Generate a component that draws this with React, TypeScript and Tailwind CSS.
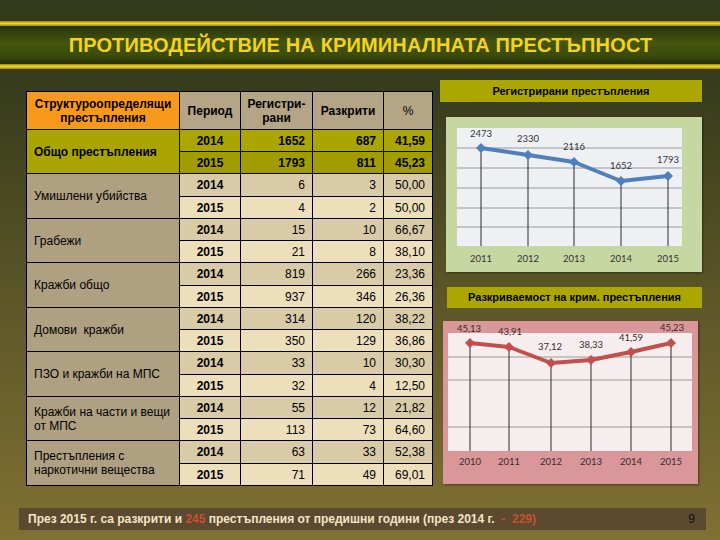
type Row = { name: string; total?: boolean; d: string[][] };

const rows: Row[] = [
  { name: "Общо престъпления", total: true, d: [["2014", "1652", "687", "41,59"], ["2015", "1793", "811", "45,23"]] },
  { name: "Умишлени убийства", d: [["2014", "6", "3", "50,00"], ["2015", "4", "2", "50,00"]] },
  { name: "Грабежи", d: [["2014", "15", "10", "66,67"], ["2015", "21", "8", "38,10"]] },
  { name: "Кражби общо", d: [["2014", "819", "266", "23,36"], ["2015", "937", "346", "26,36"]] },
  { name: "Домови  кражби", d: [["2014", "314", "120", "38,22"], ["2015", "350", "129", "36,86"]] },
  { name: "ПЗО и кражби на МПС", d: [["2014", "33", "10", "30,30"], ["2015", "32", "4", "12,50"]] },
  { name: "Кражби на части и вещи от МПС", d: [["2014", "55", "12", "21,82"], ["2015", "113", "73", "64,60"]] },
  { name: "Престъпления с наркотични вещества", d: [["2014", "63", "33", "52,38"], ["2015", "71", "49", "69,01"]] },
];

type Pt = { x: number; y: number; label: string; ly: number; lx?: number; year: string };

const regPts: Pt[] = [
  { x: 35, y: 31, label: "2473", ly: 18, year: "2011" },
  { x: 82, y: 38, label: "2330", ly: 23, year: "2012" },
  { x: 128, y: 45, label: "2116", ly: 31, year: "2013" },
  { x: 175, y: 64, label: "1652", ly: 50, year: "2014" },
  { x: 222, y: 59, label: "1793", ly: 44, year: "2015" },
];

const solvedPts: Pt[] = [
  { x: 27, y: 22, label: "45,13", ly: 9, lx: 26, year: "2010" },
  { x: 66, y: 26, label: "43,91", ly: 12, lx: 67, year: "2011" },
  { x: 108, y: 42, label: "37,12", ly: 27, lx: 107, year: "2012" },
  { x: 148, y: 39, label: "38,33", ly: 25, year: "2013" },
  { x: 188, y: 31, label: "41,59", ly: 18, year: "2014" },
  { x: 228, y: 22, label: "45,23", ly: 8, lx: 229, year: "2015" },
];

function LineChart({
  w, h, plot, grid, pts, color, plotFill, yearY, textColor,
}: {
  w: number; h: number; plot: [number, number, number, number]; grid: number[];
  pts: Pt[]; color: string; plotFill: string; yearY: number; textColor: string;
}) {
  const [px, py, pw, ph] = plot;
  const bottom = py + ph;
  return (
    <svg width={w} height={h} className="block">
      <rect x={px} y={py} width={pw} height={ph} fill={plotFill} />
      {grid.map((g) => (
        <line key={g} x1={px} x2={px + pw} y1={g} y2={g} stroke="#9a9a9a" strokeWidth={1} />
      ))}
      {pts.map((p) => (
        <line key={p.year} x1={p.x} x2={p.x} y1={p.y} y2={bottom} stroke="#2a2a2a" strokeWidth={1} />
      ))}
      <polyline
        points={pts.map((p) => `${p.x},${p.y}`).join(" ")}
        fill="none"
        stroke={color}
        strokeWidth={4}
        strokeLinejoin="round"
      />
      {pts.map((p) => (
        <polygon key={p.year} points={`${p.x},${p.y - 5} ${p.x + 5},${p.y} ${p.x},${p.y + 5} ${p.x - 5},${p.y}`} fill={color} />
      ))}
      <g fontFamily="Lato, 'Liberation Sans', sans-serif" fontSize={9.5} fill={textColor} textAnchor="middle" dominantBaseline="middle">
        {pts.map((p) => (
          <text key={p.year} x={p.lx ?? p.x} y={p.ly}>{p.label}</text>
        ))}
        {pts.map((p) => (
          <text key={p.year} x={p.x} y={yearY}>{p.year}</text>
        ))}
      </g>
    </svg>
  );
}

const rowHeights = "grid-rows-[37px_21px_21px_22px_21px_21px_21px_22px_21px_21px_21px_22px_21px_21px_21px_22px_21px]";

function CrimeTable() {
  return (
    <div className={`grid w-fit grid-cols-[152px_60px_71px_70px_48px] ${rowHeights} gap-px bg-black p-px text-[12px] text-black`}>
      <div className="flex items-center justify-center bg-[#f8991c] px-1 text-center font-bold leading-[14px]">
        Структуроопределящи престъпления
      </div>
      <div className="flex items-center justify-center bg-[#b4a587] font-bold">Период</div>
      <div className="flex items-center justify-center bg-[#b4a587] text-center font-bold leading-[14px]">
        Регистри-<br />рани
      </div>
      <div className="flex items-center justify-center bg-[#b4a587] font-bold">Разкрити</div>
      <div className="flex items-center justify-center bg-[#b4a587]">%</div>

      {rows.map((r) => (
        <>
          <div
            key={r.name}
            className={
              r.total
                ? "row-span-2 flex items-center bg-[#a9a400] pl-[7px] pr-2 font-bold leading-[14px]"
                : "row-span-2 flex items-center bg-[#b0a082] pl-[7px] pr-2 leading-[14px] whitespace-pre-wrap"
            }
          >
            {r.name}
          </div>
          {r.d.map((c, i) => {
            const bg = r.total ? (i === 0 ? "bg-[#aaa500]" : "bg-[#a19d00]") : i === 0 ? "bg-[#d9cba8]" : "bg-[#eddfbc]";
            return (
              <>
                <div key={r.name + i + "p"} className={`flex items-center justify-center font-bold ${bg}`}>{c[0]}</div>
                {c.slice(1).map((v, j) => (
                  <div key={r.name + i + j} className={`flex items-center justify-end pr-[7px] ${r.total ? "font-bold" : ""} ${bg}`}>
                    {v}
                  </div>
                ))}
              </>
            );
          })}
        </>
      ))}
    </div>
  );
}

export default function App() {
  return (
    <div
      className="flex h-[540px] w-[720px] flex-col overflow-hidden bg-[linear-gradient(180deg,#333a1b_0%,#363c1c_16%,#5c5627_55%,#817033_100%)]"
      style={{ fontFamily: "'Liberation Sans', Arial, sans-serif" }}
    >
      {/* title */}
      <div className="mt-[21px]">
        <div className="h-[5px] bg-[linear-gradient(180deg,#9c8410,#f6d624_50%,#9c8410)]" />
        <div className="flex h-[38px] items-center justify-center bg-[linear-gradient(180deg,#27320a,#45560f_45%,#3a4a0c_80%,#242e08)]">
          <h1 className="pl-[1px] text-[20px] font-bold tracking-[0.15px] text-[#f3d31c]">
            ПРОТИВОДЕЙСТВИЕ НА КРИМИНАЛНАТА ПРЕСТЪПНОСТ
          </h1>
        </div>
        <div className="h-[5px] bg-[linear-gradient(180deg,#9c8410,#f6d624_50%,#9c8410)]" />
      </div>

      {/* body */}
      <div className="flex h-[439px]">
        <div className="ml-[26px] mt-[22px]">
          <CrimeTable />
        </div>

        <div className="ml-[7px] mt-[11px] flex w-[262px] flex-col">
          <div className="flex h-[22px] items-center justify-center bg-[#aca600] text-[11px] font-bold text-black">
            Регистрирани престъпления
          </div>
          <div className="ml-[6px] mt-[15px] h-[155px] w-[256px] bg-[#c7d7a1] shadow-[1px_1px_2px_rgba(0,0,0,0.4)]">
            <LineChart
              w={256}
              h={155}
              plot={[11, 11, 225, 118]}
              grid={[31, 51, 71, 91, 110]}
              pts={regPts}
              color="#4f7fbd"
              plotFill="#eef0f4"
              yearY={143}
              textColor="#333333"
            />
          </div>
          <div className="ml-[7px] mt-[15px] flex h-[21px] w-[255px] items-center justify-center bg-[#aca600] text-[11px] font-bold text-black">
            Разкриваемост на крим. престъпления
          </div>
          <div className="ml-[3px] mt-[13px] h-[163px] w-[255px] bg-[#d9979a] shadow-[1px_1px_2px_rgba(0,0,0,0.4)]">
            <LineChart
              w={255}
              h={163}
              plot={[5, 12, 244, 118]}
              grid={[36, 59, 106]}
              pts={solvedPts}
              color="#c0504d"
              plotFill="#f6eeee"
              yearY={142}
              textColor="#3a2a2a"
            />
          </div>
        </div>
      </div>

      {/* footer */}
      <div className="ml-[19px] flex h-[22px] w-[687px] items-center justify-between bg-[#5b4930] pl-[9px] pr-[11px]">
        <p className="text-[12px] font-bold tracking-[0px] text-[#f3e5c4]">
          През 2015 г. са разкрити и <span className="text-[#c8502a]">245</span> престъпления от предишни години (през 2014 г.{" "}
          <span className="text-[#c8502a]">&nbsp;-&nbsp; 229)</span>
        </p>
        <span className="text-[12px] text-[#111]">9</span>
      </div>
    </div>
  );
}
